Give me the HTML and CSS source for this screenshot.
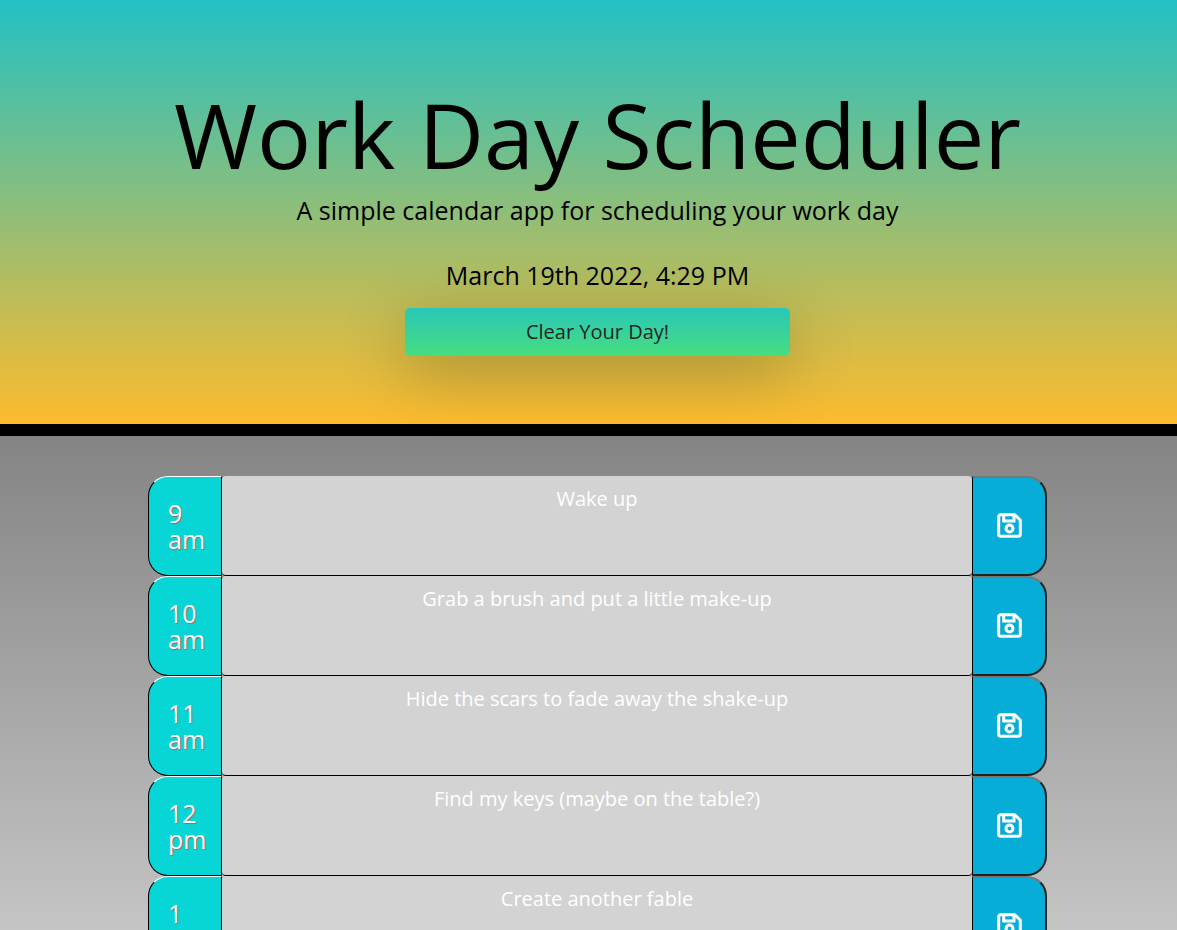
FILE: index.html
```html
<!DOCTYPE html>
<html lang="en">
<head>
<meta charset="utf-8">
<title>Work Day Scheduler</title>
<link rel="stylesheet" href="styles.css">
</head>
<body>
<svg class="sprite" aria-hidden="true">
  <symbol id="save" viewBox="0 0 25 25" fill="none" stroke="#fff" stroke-width="3">
    <path d="M1.700 3.700a2 2 0 0 1 2-2H17.700L23.300 7.200V21.300a2 2 0 0 1-2 2H3.700a2 2 0 0 1-2-2Z" stroke-linejoin="round"/>
    <path d="M6.700 2V8H17V2" stroke-width="3"/>
    <circle cx="12.500" cy="15.500" r="3.500"/>
  </symbol>
</svg>
<header class="hero">
  <h1 class="hero-title">Work Day Scheduler</h1>
  <p class="hero-text">A simple calendar app for scheduling your work day</p>
  <p class="hero-text hero-date">March 19th 2022, 4:29 PM</p>
  <button class="clear-button" type="button">Clear Your Day!</button>
</header>
<main class="schedule">
  <div class="row">
    <label class="hour" for="t9">9 am</label>
    <textarea class="task" id="t9">Wake up</textarea>
    <button class="save" type="button" aria-label="Save 9 am"><svg class="icon"><use href="#save"/></svg></button>
  </div>
  <div class="row">
    <label class="hour" for="t10">10 am</label>
    <textarea class="task" id="t10">Grab a brush and put a little make-up</textarea>
    <button class="save" type="button" aria-label="Save 10 am"><svg class="icon"><use href="#save"/></svg></button>
  </div>
  <div class="row">
    <label class="hour" for="t11">11 am</label>
    <textarea class="task" id="t11">Hide the scars to fade away the shake-up</textarea>
    <button class="save" type="button" aria-label="Save 11 am"><svg class="icon"><use href="#save"/></svg></button>
  </div>
  <div class="row">
    <label class="hour" for="t12">12 pm</label>
    <textarea class="task" id="t12">Find my keys (maybe on the table?)</textarea>
    <button class="save" type="button" aria-label="Save 12 pm"><svg class="icon"><use href="#save"/></svg></button>
  </div>
  <div class="row">
    <label class="hour" for="t1">1 pm</label>
    <textarea class="task" id="t1">Create another fable</textarea>
    <button class="save" type="button" aria-label="Save 1 pm"><svg class="icon"><use href="#save"/></svg></button>
  </div>
</main>
</body>
</html>
```
FILE: styles.css
```css
* {
  box-sizing: border-box;
}

html {
  scrollbar-width: none;
}

body {
  margin: 0;
  font-family: "Open Sans", "Noto Sans", sans-serif;
  color: #000;
}

.sprite {
  display: none;
}

.hero {
  display: flex;
  flex-direction: column;
  align-items: center;
  padding: 82px 0 68px 18px;
  border-bottom: 12px solid #000;
  background: linear-gradient(#22c1c3, #fdbb2d) padding-box;
}

.hero-title {
  margin: 0 0 5px;
  font-size: 90px;
  font-weight: 400;
  line-height: 104px;
}

.hero-text {
  margin: 0;
  font-size: 25px;
  line-height: 38px;
}

.hero-date {
  margin: 27px 0 14px;
}

.clear-button {
  width: 385px;
  max-width: 100%;
  padding: 9px 16px;
  border: 0;
  border-radius: 5px;
  background: linear-gradient(#2ac6b8, #46de7e);
  box-shadow: 0 16px 64px rgba(0, 0, 0, 0.25);
  color: #212529;
  font-family: inherit;
  font-size: 20px;
  line-height: 30px;
}

.schedule {
  padding: 40px 0 40px 18px;
  background: linear-gradient(#848484, #d0d0d0);
}

.row {
  display: grid;
  grid-template-columns: 74px 1fr 75px;
  max-width: 899px;
  min-height: 100px;
  margin: 0 auto;
}

.hour {
  display: flex;
  align-items: center;
  padding: 0 14px 0 19px;
  border: 1px solid #000;
  border-top-color: #fff;
  border-radius: 20px 0 0 20px;
  background: #08d6d6;
  color: #fff;
  font-size: 25px;
  line-height: 26px;
  text-shadow: 1px 1px 1px #a66;
}

.task {
  width: 100%;
  padding: 8px 12px;
  border: 0;
  border-bottom: 1px solid #000;
  border-radius: 4px;
  outline: 0;
  background: #d3d3d3;
  color: #fff;
  font-family: inherit;
  font-size: 20px;
  line-height: 30px;
  text-align: center;
  resize: none;
}

.save {
  display: flex;
  align-items: center;
  justify-content: center;
  padding: 0 0 2px;
  border: 2px solid #212121;
  border-top-color: #767676;
  border-left: 1px solid #000;
  border-radius: 0 20px 20px 0;
  background: #06aed7;
}

.icon {
  width: 25px;
  height: 25px;
}
```
